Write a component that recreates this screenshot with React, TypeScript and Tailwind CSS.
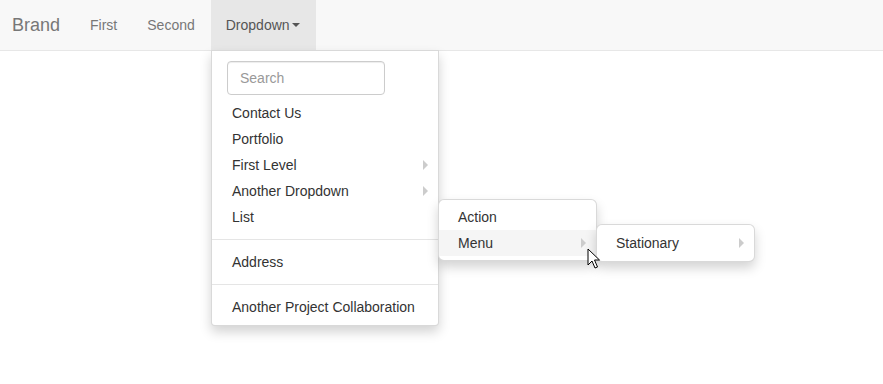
import React from 'react';

const Caret: React.FC = () => (
  <span className="absolute right-[10px] top-1/2 -mt-[5px] h-0 w-0 border-y-[5px] border-l-[5px] border-y-transparent border-l-[#ccc]" />
);

const Item: React.FC<{ label: string; sub?: boolean; active?: boolean; inset?: boolean }> = ({ label, sub, active, inset }) => (
  <li className={`relative block py-[3px] leading-5 text-[#333] ${inset ? 'pl-[19px] pr-5' : 'px-5'} ${active ? 'bg-[#f5f5f5]' : ''}`}>
    {label}
    {sub && <Caret />}
  </li>
);

const Divider: React.FC = () => <li className="my-[9px] h-px bg-[#e5e5e5]" />;

const Cursor: React.FC = () => (
  <svg className="absolute left-[587px] top-[248px]" width="14" height="22" viewBox="0 0 14 22">
    <path d="M1 1 L1 17 L5 13 L8 20 L10.5 19 L7.5 12 L12.5 12 Z" fill="#fff" stroke="#000" strokeWidth="1" strokeLinejoin="round" />
  </svg>
);

export default function App() {
  return (
    <div className="relative h-[384px] w-[883px] bg-white text-[14px] font-['Liberation_Sans',Arial,sans-serif]">
      <nav className="flex h-[51px] border-b border-[#e7e7e7] bg-[#f8f8f8]">
        <a className="pl-[12px] pr-[15px] py-[15px] text-[18px] leading-5 text-[#777]">Brand</a>
        <a className="px-[15px] py-[15px] leading-5 text-[#777]">First</a>
        <a className="px-[15px] py-[15px] leading-5 text-[#777]">Second</a>
        <a className="ml-px flex items-center bg-[#e7e7e7] pl-[15px] pr-[16px] py-[15px] leading-5 text-[#555]">
          Dropdown
          <span className="ml-[2px] h-0 w-0 border-x-[4px] border-t-[4px] border-x-transparent border-t-[#555]" />
        </a>
      </nav>

      <ul className="absolute left-[211px] top-[50px] w-[228px] rounded-b-[4px] border border-[rgba(0,0,0,0.15)] bg-white py-[5px] shadow-[0_6px_12px_rgba(0,0,0,0.175)]">
        <li className="mx-[15px] mb-[5px] mt-[5px]">
          <input
            placeholder="Search"
            className="h-[34px] w-[158px] rounded-[4px] border border-[#ccc] px-3 text-[14px] text-[#555] placeholder:text-[#999] shadow-[inset_0_1px_1px_rgba(0,0,0,0.075)] outline-none"
          />
        </li>
        <Item label="Contact Us" />
        <Item label="Portfolio" />
        <Item label="First Level" sub />
        <Item label="Another Dropdown" sub />
        <Item label="List" />
        <Divider />
        <Item label="Address" />
        <Divider />
        <Item label="Another Project Collaboration" />
      </ul>

      <ul className="absolute left-[438px] top-[199px] w-[159px] rounded-[6px] border border-[rgba(0,0,0,0.15)] bg-white py-[4px] shadow-[0_6px_12px_rgba(0,0,0,0.175)]">
        <Item label="Action" inset />
        <Item label="Menu" sub active inset />
      </ul>

      <ul className="absolute left-[596px] top-[224px] w-[159px] rounded-[6px] border border-[rgba(0,0,0,0.15)] bg-white py-[5px] shadow-[0_6px_12px_rgba(0,0,0,0.175)]">
        <Item label="Stationary" sub inset />
      </ul>

      <Cursor />
    </div>
  );
}
